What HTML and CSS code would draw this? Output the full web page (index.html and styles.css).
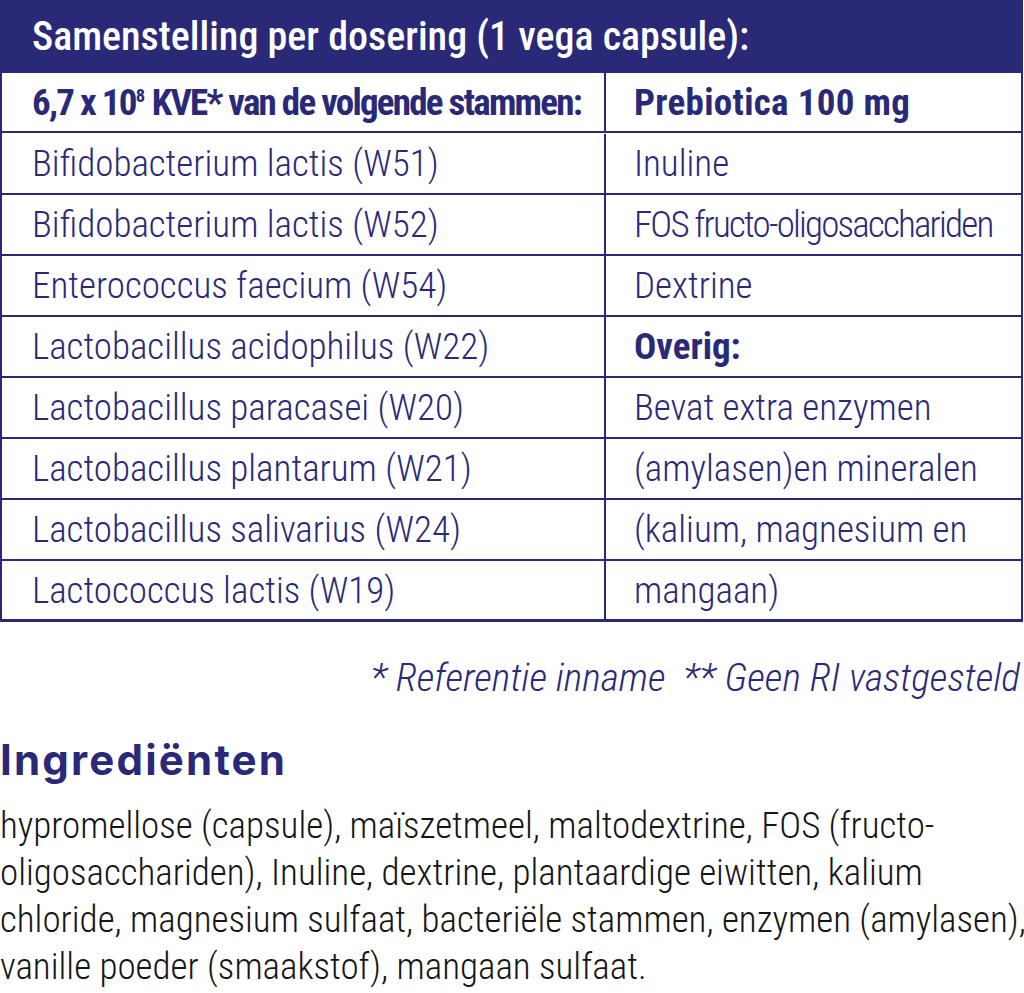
FILE: index.html
```html
<!DOCTYPE html>
<html lang="nl">
<head>
<meta charset="utf-8">
<title>Samenstelling</title>
<link rel="stylesheet" href="styles.css">
</head>
<body>
<section class="composition">
  <div class="comp-title">Samenstelling per dosering (1 vega capsule):</div>
  <div class="comp-grid">
    <div class="cell left head">6,7 x 10<sup>8</sup>&nbsp;KVE* van de volgende stammen:</div>
    <div class="cell right head">Prebiotica 100 mg</div>
    <div class="cell left">Bifidobacterium lactis (W51)</div>
    <div class="cell right">Inuline</div>
    <div class="cell left">Bifidobacterium lactis (W52)</div>
    <div class="cell right tight">FOS fructo-oligosacchariden</div>
    <div class="cell left">Enterococcus faecium (W54)</div>
    <div class="cell right">Dextrine</div>
    <div class="cell left">Lactobacillus acidophilus (W22)</div>
    <div class="cell right bold">Overig:</div>
    <div class="cell left">Lactobacillus paracasei (W20)</div>
    <div class="cell right">Bevat extra enzymen</div>
    <div class="cell left">Lactobacillus plantarum (W21)</div>
    <div class="cell right">(amylasen)en mineralen</div>
    <div class="cell left">Lactobacillus salivarius (W24)</div>
    <div class="cell right">(kalium, magnesium en</div>
    <div class="cell left last">Lactococcus lactis (W19)</div>
    <div class="cell right last">mangaan)</div>
  </div>
</section>
<p class="footnote">* Referentie inname&nbsp; ** Geen RI vastgesteld</p>
<h2 class="ing-title">Ingrediënten</h2>
<p class="ing-text">hypromellose (capsule), maïszetmeel, maltodextrine, FOS (fructo-<br>oligosacchariden), Inuline, dextrine, plantaardige eiwitten, kalium<br>chloride, magnesium sulfaat, bacteriële stammen, enzymen (amylasen),<br>vanille poeder (smaakstof), mangaan sulfaat.</p>
</body>
</html>
```
FILE: styles.css
```css
html, body {
  margin: 0;
  padding: 0;
  background: #ffffff;
}
body {
  font-family: "Roboto", "Open Sans", sans-serif;
  font-stretch: 75%;
  font-weight: 300;
  width: 1024px;
  overflow: hidden;
}
.composition {
  width: 1023px;
}
.comp-title {
  height: 73px;
  box-sizing: border-box;
  background: #2a2978;
  color: #ffffff;
  font-size: 40px;
  font-weight: 500;
  line-height: 73px;
  padding-left: 32px;
  white-space: nowrap;
}
.comp-grid {
  display: grid;
  grid-template-columns: 604px 1fr;
  grid-auto-rows: 61px;
  border-left: 2px solid #2a2978;
  border-right: 2px solid #2a2978;
}
.comp-grid .head {
  height: 60px;
}
.cell {
  box-sizing: border-box;
  border-bottom: 2px solid #2a2978;
  color: #2a2978;
  font-size: 37px;
  display: flex;
  align-items: center;
  white-space: nowrap;
  overflow: hidden;
}
.cell.left {
  border-right: 2px solid #2a2978;
  padding-left: 30px;
}
.cell.right {
  padding-left: 28px;
}
.cell.head, .cell.bold {
  font-weight: 700;
}
.cell.left.head {
  letter-spacing: -1.75px;
}
.cell.right.head {
  letter-spacing: 0.3px;
}
.cell.tight {
  letter-spacing: -1.8px;
}
.cell.last {
  border-bottom-width: 3px;
}
.cell sup {
  font-size: 0.5em;
  line-height: 0;
  position: relative;
  top: -0.35em;
  vertical-align: baseline;
  letter-spacing: 0;
}
.footnote {
  margin: 31px 0 0;
  text-align: right;
  padding-right: 4px;
  color: #2a2978;
  font-style: italic;
  font-size: 39.5px;
  line-height: 50px;
}
.ing-title {
  margin: 29px 0 0;
  font-family: "Inter", "Lato", sans-serif;
  font-stretch: 100%;
  font-weight: 700;
  font-size: 42px;
  letter-spacing: 2.2px;
  line-height: 56px;
  color: #2a2978;
}
.ing-text {
  margin: 14px 0 0;
  color: #151515;
  font-size: 37px;
  line-height: 47px;
  white-space: nowrap;
}
```
